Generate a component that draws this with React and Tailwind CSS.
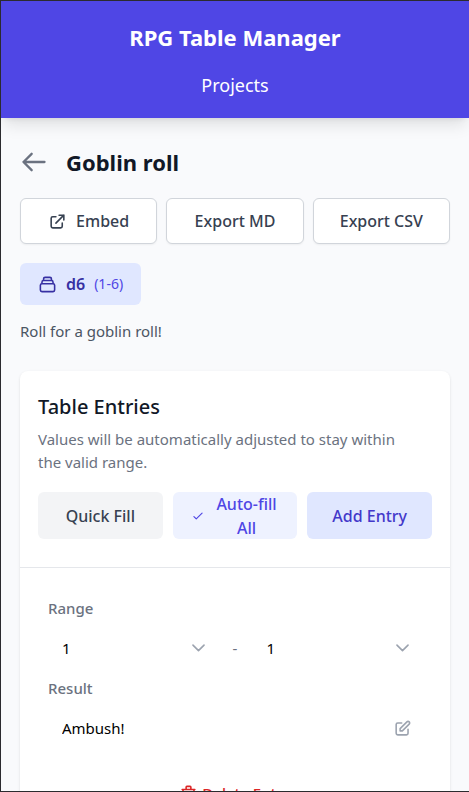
const paths = {
  back: "M10 19l-7-7m0 0l7-7m-7 7h18",
  external: "M10 6H6a2 2 0 00-2 2v10a2 2 0 002 2h10a2 2 0 002-2v-4M14 4h6m0 0v6m0-6L10 14",
  collection:
    "M19 11H5m14 0a2 2 0 012 2v6a2 2 0 01-2 2H5a2 2 0 01-2-2v-6a2 2 0 012-2m14 0V9a2 2 0 00-2-2M5 11V9a2 2 0 012-2m0 0V5a2 2 0 012-2h6a2 2 0 012 2v2M7 7h10",
  check: "M5 13l4 4L19 7",
  chevron: "M19 9l-7 7-7-7",
  edit: "M11 5H6a2 2 0 00-2 2v11a2 2 0 002 2h11a2 2 0 002-2v-5m-1.414-9.414a2 2 0 112.828 2.828L11.828 15H9v-2.828l8.586-8.586z",
  trash:
    "M19 7l-.867 12.142A2 2 0 0116.138 21H7.862a2 2 0 01-1.995-1.858L5 7m5 4v6m4-6v6m1-10V4a1 1 0 00-1-1h-4a1 1 0 00-1 1v3M4 7h16",
};

function Icon({ name, className }) {
  return (
    <svg
      className={"shrink-0 " + className}
      viewBox="0 0 24 24"
      fill="none"
      stroke="currentColor"
      strokeWidth={2}
      strokeLinecap="round"
      strokeLinejoin="round"
      aria-hidden="true"
    >
      <path d={paths[name]} />
    </svg>
  );
}

function ExportButton({ icon, children }) {
  return (
    <button
      type="button"
      className="flex h-[46px] flex-1 items-center justify-center gap-[9px] rounded-md border border-[#d1d5db] bg-white text-base font-medium text-[#374151] shadow-xs"
    >
      {icon && <Icon name={icon} className="size-[19px]" />}
      {children}
    </button>
  );
}

function RangeSelect({ label }) {
  return (
    <div className="relative min-w-0 flex-1">
      <select
        aria-label={label}
        defaultValue="1"
        className="h-10 w-full appearance-none bg-transparent px-3.5 text-[15px] text-black"
      >
        {["1", "2", "3", "4", "5", "6"].map((n) => (
          <option key={n}>{n}</option>
        ))}
      </select>
      <Icon
        name="chevron"
        className="pointer-events-none absolute top-2.5 right-2.5 size-[19px] text-[#9ca3af]"
      />
    </div>
  );
}

export default function App() {
  return (
    <div className="h-screen overflow-hidden border-y border-l border-[#2b2b2f] bg-[#f9fafc] font-['Noto_Sans','Open_Sans',sans-serif] text-[15px]">
      <header className="flex flex-col items-center gap-[18px] bg-[#4f46e5] pt-5 pb-[19px] text-white shadow-lg">
        <h1 className="text-[22px] leading-8 font-bold">RPG Table Manager</h1>
        <nav>
          <a href="#projects" className="block text-[18px] leading-7">
            Projects
          </a>
        </nav>
      </header>

      <main className="px-[19px] pt-7">
        <div className="flex items-center gap-[18px]">
          <button type="button" aria-label="Back" className="text-[#6b7280]">
            <Icon name="back" className="size-7" />
          </button>
          <h2 className="text-[22px] leading-8 font-bold text-[#111827]">Goblin roll</h2>
        </div>

        <div className="mt-5 flex gap-[9px]">
          <ExportButton icon="external">Embed</ExportButton>
          <ExportButton>Export MD</ExportButton>
          <ExportButton>Export CSV</ExportButton>
        </div>

        <div className="mt-[19px] flex h-[42px] w-fit items-center gap-[9px] rounded-md bg-[#e0e7ff] px-[18px] text-[#3730a3]">
          <Icon name="collection" className="size-[19px]" />
          <span className="text-base font-semibold">d6</span>
          <span className="text-sm text-[#4f46e5]">(1-6)</span>
        </div>

        <p className="mt-[15px] leading-[23px] text-[#4b5563]">Roll for a goblin roll!</p>

        <section className="mt-7 rounded-lg bg-white shadow-sm">
          <div className="border-b border-[#e5e7eb] px-[18px] pt-5 pb-7">
            <h3 className="text-xl leading-8 font-medium text-[#111827]">Table Entries</h3>
            <p className="mt-[5px] pr-5 leading-[23px] text-[#6b7280]">
              Values will be automatically adjusted to stay within the valid range.
            </p>
            <div className="mt-[18px] grid grid-cols-3 gap-[10px] text-base leading-6 font-medium">
              <button type="button" className="h-[47px] rounded-md bg-[#f3f4f6] text-[#374151]">
                Quick Fill
              </button>
              <button
                type="button"
                className="flex h-[47px] items-center justify-center gap-[9px] rounded-md bg-[#eef2ff] px-[18px] text-[#4f46e5]"
              >
                <Icon name="check" className="size-3.5" />
                <span>Auto-fill All</span>
              </button>
              <button type="button" className="h-[47px] rounded-md bg-[#e0e7ff] text-[#4338ca]">
                Add Entry
              </button>
            </div>
          </div>

          <div className="px-7 pt-7">
            <h4 className="leading-6 font-medium text-[#6b7280]">Range</h4>
            <div className="mt-2 flex items-center gap-[15px]">
              <RangeSelect label="Range start" />
              <span className="text-[#6b7280]">-</span>
              <RangeSelect label="Range end" />
            </div>
            <label htmlFor="result" className="mt-2 block leading-6 font-medium text-[#6b7280]">
              Result
            </label>
            <div className="mt-2 flex items-center pr-2.5 pl-3.5">
              <input
                id="result"
                defaultValue="Ambush!"
                className="h-10 min-w-0 flex-1 bg-transparent text-[15px] text-black"
              />
              <button type="button" aria-label="Edit result" className="text-[#9ca3af]">
                <Icon name="edit" className="size-[19px]" />
              </button>
            </div>
            <button
              type="button"
              className="mt-[22px] flex h-[46px] w-full items-center justify-center gap-1 font-medium text-[#dc2626]"
            >
              <Icon name="trash" className="size-[19px]" />
              Delete Entry
            </button>
          </div>
        </section>
      </main>
    </div>
  );
}
